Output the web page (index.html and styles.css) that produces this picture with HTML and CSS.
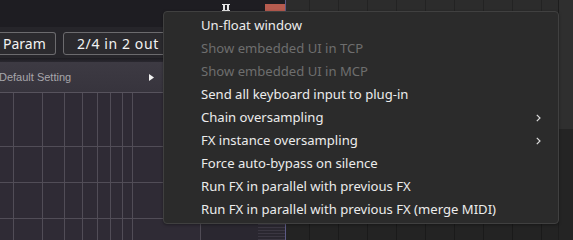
FILE: index.html
```html
<!DOCTYPE html>
<html>
<head>
<meta charset="utf-8">
<link rel="stylesheet" href="styles.css">
</head>
<body>
<div class="app">
  <div class="left">
    <div class="topbar">
      <svg class="pause-icon" width="8" height="7" viewBox="0 0 8 7"><rect x="0" y="0" width="8" height="1" fill="#e4e4e4"/><rect x="0" y="6" width="8" height="1" fill="#e4e4e4"/><rect x="1" y="0" width="2" height="7" fill="#e4e4e4"/><rect x="5" y="0" width="2" height="7" fill="#e4e4e4"/></svg>
      <span class="rec-block"></span>
    </div>
    <div class="lower">
      <div class="plugin">
        <div class="toolbar">
          <span class="btn btn-first">Param</span>
          <span class="btn btn-io">2/4 in 2 out</span>
        </div>
        <div class="sep"></div>
        <div class="preset">
          <span class="preset-name">Default Setting</span>
          <svg class="preset-arrow" width="5" height="7" viewBox="0 0 5 7"><polygon points="0,0 5,3.5 0,7" fill="#f2f2f2"/></svg>
        </div>
        <svg class="grid" width="200" height="147" viewBox="0 0 200 147">
          <g stroke="#514d57" stroke-width="1" shape-rendering="crispEdges">
            <line x1="0" y1="53.5" x2="200" y2="53.5"/>
            <line x1="0" y1="89.5" x2="200" y2="89.5"/>
            <line x1="0" y1="125.5" x2="200" y2="125.5"/>
            <line x1="13.5" y1="0" x2="13.5" y2="147"/>
            <line x1="42.5" y1="0" x2="42.5" y2="147"/>
            <line x1="64.5" y1="0" x2="64.5" y2="147"/>
            <line x1="82.5" y1="0" x2="82.5" y2="147"/>
            <line x1="97.5" y1="0" x2="97.5" y2="147"/>
            <line x1="110.5" y1="0" x2="110.5" y2="147"/>
            <line x1="122.5" y1="0" x2="122.5" y2="147"/>
            <line x1="132.5" y1="0" x2="132.5" y2="147"/>
          </g>
        </svg>
      </div>
      <div class="middle">
        <div class="stripes"></div>
      </div>
    </div>
  </div>
  <div class="arrange">
    <div class="tracks">
      <div class="track track-top"></div>
      <div class="track track-bottom"></div>
    </div>
    <div class="side">
      <div class="side-top"></div>
      <div class="side-bottom"></div>
    </div>
  </div>

  <div class="menu">
    <div class="item">Un-float window</div>
    <div class="item disabled">Show embedded UI in TCP</div>
    <div class="item disabled">Show embedded UI in MCP</div>
    <div class="item">Send all keyboard input to plug-in</div>
    <div class="item has-sub">Chain oversampling<svg class="chev" width="5" height="8" viewBox="0 0 5 8"><polyline points="0.8,0.8 4,4 0.8,7.2" fill="none" stroke="#dcdcdc" stroke-width="1.2"/></svg></div>
    <div class="item has-sub">FX instance oversampling<svg class="chev" width="5" height="8" viewBox="0 0 5 8"><polyline points="0.8,0.8 4,4 0.8,7.2" fill="none" stroke="#dcdcdc" stroke-width="1.2"/></svg></div>
    <div class="item">Force auto-bypass on silence</div>
    <div class="item">Run FX in parallel with previous FX</div>
    <div class="item">Run FX in parallel with previous FX (merge MIDI)</div>
  </div>
</div>
</body>
</html>
```

FILE: styles.css
```css
html, body {
  margin: 0;
  padding: 0;
  background: #1e1d22;
}

.app {
  position: relative;
  display: flex;
  width: 573px;
  height: 240px;
  overflow: hidden;
  font-family: "Noto Sans", "Open Sans", sans-serif;
}

.left {
  width: 285px;
  display: flex;
  flex-direction: column;
}

.topbar {
  height: 27px;
  flex: none;
  background: #1e1d22;
  display: flex;
  align-items: flex-start;
}

.pause-icon {
  margin-left: 222px;
  margin-top: 4px;
}

.rec-block {
  margin-left: 35px;
  margin-top: 4px;
  width: 20px;
  height: 12px;
  background: #b65b4f;
}

.lower {
  flex: 1;
  display: flex;
}

.plugin {
  width: 200px;
  border-right: 1px solid #4f4b55;
  display: flex;
  flex-direction: column;
  background: #2f2b35;
}

.toolbar {
  height: 31px;
  flex: none;
  box-sizing: border-box;
  padding-top: 5px;
  display: flex;
  gap: 7px;
  background: #26252a;
  overflow: hidden;
}

.btn {
  box-sizing: border-box;
  height: 23px;
  border: 1px solid #6c6b6e;
  border-radius: 3px;
  background: #2b2a2e;
  color: #f2f2f2;
  font-size: 14px;
  line-height: 21px;
  white-space: nowrap;
  flex: none;
}

.btn-first {
  border-left: none;
  border-top-left-radius: 0;
  border-bottom-left-radius: 0;
  padding: 0 11px 0 3px;
  width: 56px;
}

.btn-io {
  padding: 0 12px 0 13px;
  width: 130px;
  letter-spacing: 0.6px;
}

.sep {
  height: 4px;
  flex: none;
  background: linear-gradient(#1d1c21, #2a2830);
}

.preset {
  height: 31px;
  flex: none;
  box-sizing: border-box;
  border-bottom: 1px solid #57535d;
  background: linear-gradient(#3d3a43, #37343d);
  display: flex;
  align-items: center;
  justify-content: space-between;
  padding: 0 46px 0 0;
}

.preset-name {
  font-family: "Liberation Sans", Arial, sans-serif;
  font-size: 11px;
  color: #a8a6ab;
  margin-left: -1px;
}

.preset-arrow {
  margin-top: 1px;
}

.grid {
  display: block;
  flex: none;
}

.middle {
  flex: 1;
  background: #2a2730;
  display: flex;
  justify-content: flex-end;
}

.stripes {
  width: 27px;
  background: repeating-linear-gradient(#2a2730 0 2px, #3b3742 2px 3px);
}

.arrange {
  flex: 1;
  display: flex;
  border-left: 1px solid #5c5a86;
}

.tracks {
  width: 272px;
  display: flex;
  flex-direction: column;
  border-right: 1px solid #1d1d1d;
}

.track {
  background-size: 29px 100%;
  background-position: 23px 0;
}

.track-top {
  height: 129px;
  background-color: #2c2c2c;
  background-image: linear-gradient(to right, #232323 1px, transparent 1px);
}

.track-bottom {
  flex: 1;
  background-color: #232323;
  background-image: linear-gradient(to right, #1a1a1a 1px, transparent 1px);
}

.side {
  flex: 1;
  display: flex;
  flex-direction: column;
}

.side-top {
  height: 129px;
  background: #2f2f2f;
}

.side-bottom {
  flex: 1;
  background: #242424;
}

.menu {
  position: absolute;
  left: 163px;
  top: 11px;
  width: 396px;
  height: 213px;
  box-sizing: border-box;
  padding: 2px 0;
  background: #2b2b2b;
  border: 1px solid #404040;
  border-radius: 4px;
  box-shadow: 0 1px 3px rgba(0, 0, 0, 0.35);
}

.item {
  height: 23px;
  line-height: 23px;
  padding-left: 37px;
  padding-right: 17px;
  font-size: 13.1px;
  color: #ececec;
  display: flex;
  align-items: center;
  justify-content: space-between;
  white-space: nowrap;
}

.item.disabled {
  color: #6e6e6e;
}

.chev {
  flex: none;
}
```
